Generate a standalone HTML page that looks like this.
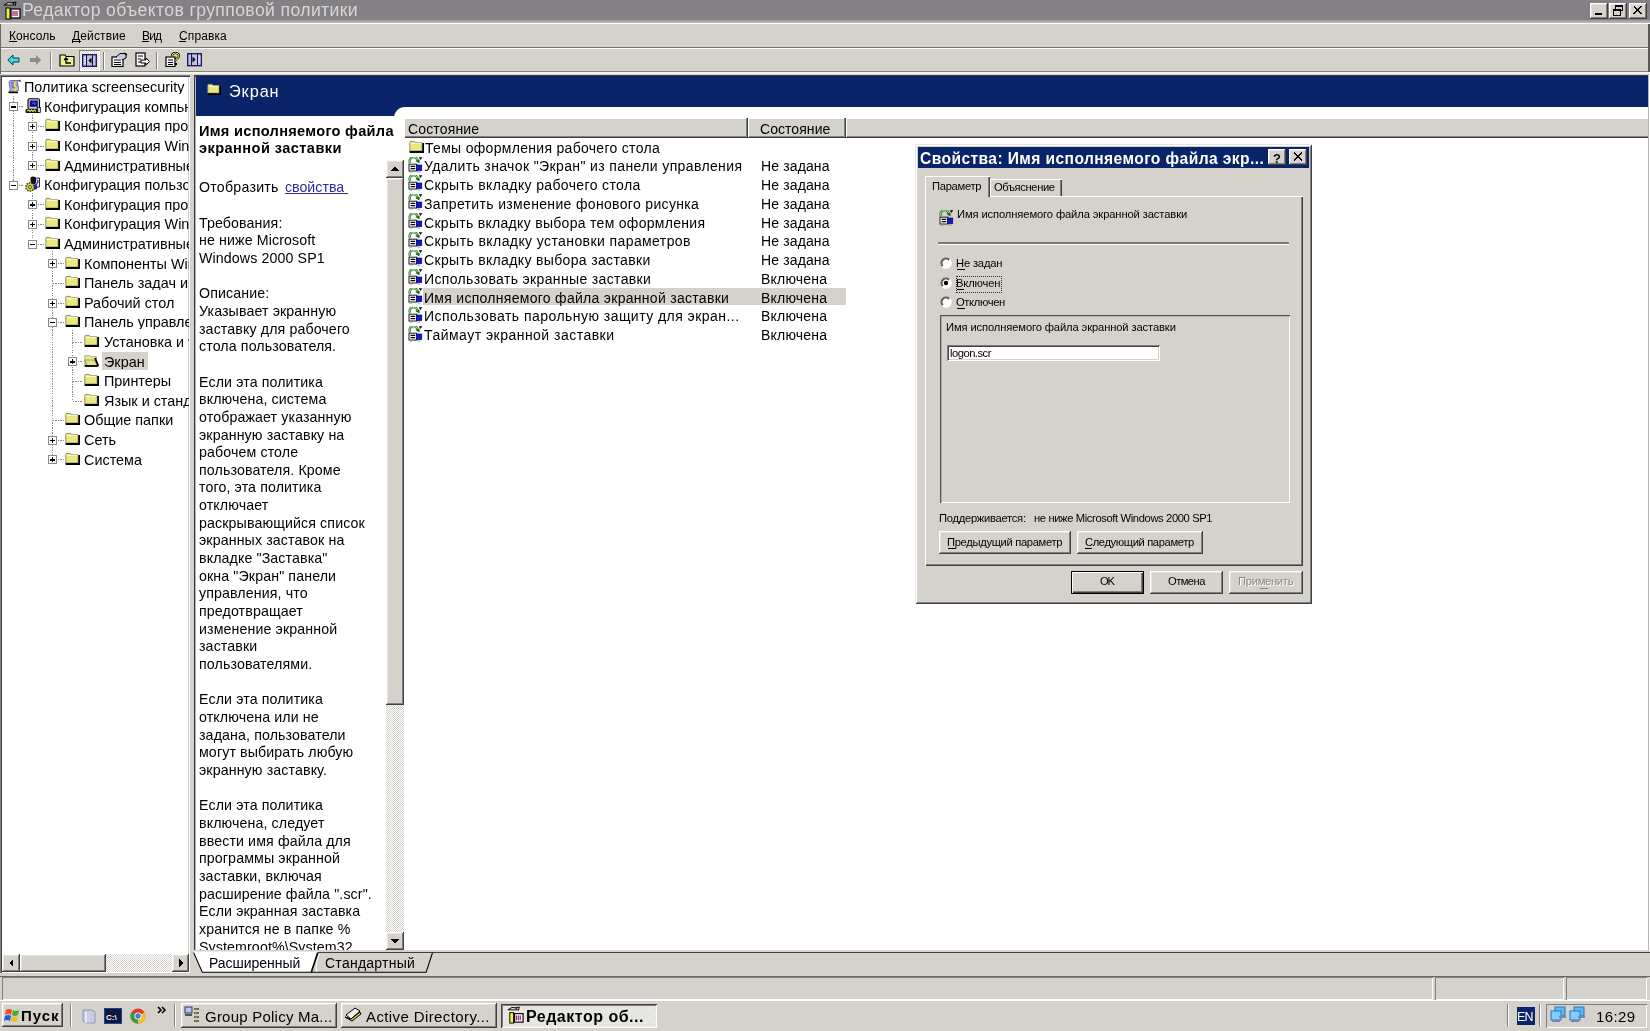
<!DOCTYPE html><html><head><meta charset="utf-8"><style>
html,body{margin:0;padding:0;width:1650px;height:1031px;overflow:hidden;background:#d5d2cc;font-family:"Liberation Sans", sans-serif;}
body>div,body>span,body>svg{position:absolute;box-sizing:border-box;}
span.t{white-space:pre;will-change:transform;}
</style></head><body>
<div style="left:0px;top:0px;width:1650px;height:20px;background:#838185;"></div>
<div style="left:0px;top:20px;width:1650px;height:3px;background:linear-gradient(#9a989b,#bdbbbd);"></div>
<div style="left:0px;top:23px;width:1650px;height:1px;background:#ffffff;"></div>
<span class="t" style="left:21.70px;top:1.60px;font-size:17.6px;line-height:17.6px;color:#d8d6d2;font-weight:400;letter-spacing:0.386px;">Редактор объектов групповой политики</span>
<div style="left:1590px;top:2.5px;width:17.5px;height:16px;box-shadow: inset -1px -1px #404040, inset 1px 1px #ffffff, inset -2px -2px #808080, inset 2px 2px #e6e3de;background:#d5d2cc;"></div>
<div style="left:1609px;top:2.5px;width:17.5px;height:16px;box-shadow: inset -1px -1px #404040, inset 1px 1px #ffffff, inset -2px -2px #808080, inset 2px 2px #e6e3de;background:#d5d2cc;"></div>
<div style="left:1629px;top:2.5px;width:17.5px;height:16px;box-shadow: inset -1px -1px #404040, inset 1px 1px #ffffff, inset -2px -2px #808080, inset 2px 2px #e6e3de;background:#d5d2cc;"></div>
<div style="left:0px;top:24px;width:1650px;height:23px;background:#d5d2cc;"></div>
<div style="left:0px;top:47px;width:1650px;height:1px;background:#767470;"></div>
<div style="left:0px;top:48px;width:1650px;height:1px;background:#ffffff;"></div>
<span class="t" style="left:8.90px;top:29.54px;font-size:12px;line-height:12px;color:#000;font-weight:400;letter-spacing:0.068px;">Консоль</span>
<div style="left:9.2px;top:41.3px;width:7.5px;height:1px;background:#000;"></div>
<span class="t" style="left:72.10px;top:29.54px;font-size:12px;line-height:12px;color:#000;font-weight:400;letter-spacing:0.148px;">Действие</span>
<div style="left:72.4px;top:41.3px;width:8.5px;height:1px;background:#000;"></div>
<span class="t" style="left:141.90px;top:29.54px;font-size:12px;line-height:12px;color:#000;font-weight:400;letter-spacing:-0.809px;">Вид</span>
<div style="left:142.2px;top:41.3px;width:7px;height:1px;background:#000;"></div>
<span class="t" style="left:178.60px;top:29.54px;font-size:12px;line-height:12px;color:#000;font-weight:400;letter-spacing:0.120px;">Справка</span>
<div style="left:178.89999999999998px;top:41.3px;width:7.5px;height:1px;background:#000;"></div>
<div style="left:0px;top:49px;width:1650px;height:22px;background:#d5d2cc;"></div>
<div style="left:0px;top:71px;width:1650px;height:1px;background:#858380;"></div>
<div style="left:0px;top:72px;width:1650px;height:2px;background:#f4f2ee;"></div>
<div style="left:0px;top:74px;width:1650px;height:902px;background:#d5d2cc;"></div>
<div style="left:0px;top:75px;width:190px;height:898px;background:#fff;box-shadow: inset 1px 1px #808080, inset 2px 2px #404040, inset -1px -1px #ffffff, inset -2px -2px #d5d2cc;"></div>
<div style="left:194px;top:75px;width:1456px;height:876px;background:#fff;box-shadow: inset 1.4px 1.4px #3a3a3a;"></div>
<div style="left:196px;top:76px;width:1454px;height:40px;background:#0a246a;"></div>
<div style="left:394px;top:106.8px;width:1256px;height:20px;background:#fff;border-top-left-radius:11px;"></div>
<div style="left:196px;top:116px;width:198px;height:2px;background:#fff;"></div>
<span class="t" style="left:229.10px;top:82.80px;font-size:16.3px;line-height:16.3px;color:#fff;font-weight:400;letter-spacing:0.916px;">Экран</span>
<div style="left:13.0px;top:96px;width:1px;height:89.35px;background:repeating-linear-gradient(#8c8c8c 0 1.3px,transparent 1.3px 2.45px);"></div>
<div style="left:32.0px;top:115px;width:1px;height:50.74000000000001px;background:repeating-linear-gradient(#8c8c8c 0 1.3px,transparent 1.3px 2.45px);"></div>
<div style="left:32.0px;top:193.35px;width:1px;height:50.83000000000001px;background:repeating-linear-gradient(#8c8c8c 0 1.3px,transparent 1.3px 2.45px);"></div>
<div style="left:52.0px;top:251.18px;width:1px;height:208.70999999999998px;background:repeating-linear-gradient(#8c8c8c 0 1.3px,transparent 1.3px 2.45px);"></div>
<div style="left:72.0px;top:329.62px;width:1px;height:71.44px;background:repeating-linear-gradient(#8c8c8c 0 1.3px,transparent 1.3px 2.45px);"></div>
<div style="left:18.5px;top:106.41px;width:5.5px;height:1px;background:repeating-linear-gradient(90deg,#8c8c8c 0 1.3px,transparent 1.3px 2.45px);"></div>
<div style="left:37.5px;top:126.01999999999998px;width:6.299999999999997px;height:1px;background:repeating-linear-gradient(90deg,#8c8c8c 0 1.3px,transparent 1.3px 2.45px);"></div>
<div style="left:37.5px;top:145.63px;width:6.299999999999997px;height:1px;background:repeating-linear-gradient(90deg,#8c8c8c 0 1.3px,transparent 1.3px 2.45px);"></div>
<div style="left:37.5px;top:165.24px;width:6.299999999999997px;height:1px;background:repeating-linear-gradient(90deg,#8c8c8c 0 1.3px,transparent 1.3px 2.45px);"></div>
<div style="left:18.5px;top:184.85px;width:5.5px;height:1px;background:repeating-linear-gradient(90deg,#8c8c8c 0 1.3px,transparent 1.3px 2.45px);"></div>
<div style="left:37.5px;top:204.45999999999998px;width:6.299999999999997px;height:1px;background:repeating-linear-gradient(90deg,#8c8c8c 0 1.3px,transparent 1.3px 2.45px);"></div>
<div style="left:37.5px;top:224.07px;width:6.299999999999997px;height:1px;background:repeating-linear-gradient(90deg,#8c8c8c 0 1.3px,transparent 1.3px 2.45px);"></div>
<div style="left:37.5px;top:243.68px;width:6.299999999999997px;height:1px;background:repeating-linear-gradient(90deg,#8c8c8c 0 1.3px,transparent 1.3px 2.45px);"></div>
<div style="left:57.5px;top:263.29px;width:6.099999999999994px;height:1px;background:repeating-linear-gradient(90deg,#8c8c8c 0 1.3px,transparent 1.3px 2.45px);"></div>
<div style="left:52.5px;top:282.9px;width:11.099999999999994px;height:1px;background:repeating-linear-gradient(90deg,#8c8c8c 0 1.3px,transparent 1.3px 2.45px);"></div>
<div style="left:57.5px;top:302.51px;width:6.099999999999994px;height:1px;background:repeating-linear-gradient(90deg,#8c8c8c 0 1.3px,transparent 1.3px 2.45px);"></div>
<div style="left:57.5px;top:322.12px;width:6.099999999999994px;height:1px;background:repeating-linear-gradient(90deg,#8c8c8c 0 1.3px,transparent 1.3px 2.45px);"></div>
<div style="left:72.5px;top:341.73px;width:10.099999999999994px;height:1px;background:repeating-linear-gradient(90deg,#8c8c8c 0 1.3px,transparent 1.3px 2.45px);"></div>
<div style="left:77.5px;top:361.34px;width:5.099999999999994px;height:1px;background:repeating-linear-gradient(90deg,#8c8c8c 0 1.3px,transparent 1.3px 2.45px);"></div>
<div style="left:72.5px;top:380.95px;width:10.099999999999994px;height:1px;background:repeating-linear-gradient(90deg,#8c8c8c 0 1.3px,transparent 1.3px 2.45px);"></div>
<div style="left:72.5px;top:400.56px;width:10.099999999999994px;height:1px;background:repeating-linear-gradient(90deg,#8c8c8c 0 1.3px,transparent 1.3px 2.45px);"></div>
<div style="left:52.5px;top:420.17px;width:11.099999999999994px;height:1px;background:repeating-linear-gradient(90deg,#8c8c8c 0 1.3px,transparent 1.3px 2.45px);"></div>
<div style="left:57.5px;top:439.78000000000003px;width:6.099999999999994px;height:1px;background:repeating-linear-gradient(90deg,#8c8c8c 0 1.3px,transparent 1.3px 2.45px);"></div>
<div style="left:57.5px;top:459.39px;width:6.099999999999994px;height:1px;background:repeating-linear-gradient(90deg,#8c8c8c 0 1.3px,transparent 1.3px 2.45px);"></div>
<svg style="left:7px;top:79.3px" width="15" height="15" viewBox="0 0 15 15"><path d="M4 1.5 Q2 1.5 2 3.5 L3 9 Q3.5 11 2 12.5 L10 12.5 Q12 12 11.5 9.5 L10.5 4 Q10 2 12 1.5 Z" fill="#a8a8e0" stroke="#5858a0" stroke-width="0.8"/><path d="M4 4 L9 4 M4.5 6 L9.5 6 M5 8 L10 8" stroke="#4040a0" stroke-width="0.9"/><path d="M9 3.5 Q6 5 8.5 7.5 Q11 10 7 11.5" fill="none" stroke="#e8e040" stroke-width="2"/><path d="M1.5 13.5 L11 13.5" stroke="#000" stroke-width="1.4"/><path d="M12 1 Q14 1.5 13 3" fill="none" stroke="#000" stroke-width="1"/></svg>
<span class="t" style="left:23.90px;top:80.11px;font-size:14.4px;line-height:14.4px;color:#000;font-weight:400;width:164.6px;overflow:hidden;">Политика screensecurity</span>
<div style="left:9.0px;top:102.41px;width:9px;height:9px;background:#fff;border:1px solid #8a8a8a;"></div>
<div style="left:11.0px;top:106.41px;width:5px;height:1.2px;background:#000;"></div>
<svg style="left:25px;top:97.91px" width="16" height="16" viewBox="0 0 16 16"><rect x="3" y="0.8" width="11.5" height="10.5" rx="1.5" fill="#c8c8d8" stroke="#000" stroke-width="1.1"/><rect x="4.8" y="2.5" width="8" height="6.3" fill="#10108a"/><path d="M7 5 h3 v2" stroke="#8080ff" stroke-width="0.8" fill="none"/><path d="M0.8 11 L14.5 11 Q15.5 13 14.5 15 L0.8 15 Q0.2 13 0.8 11 Z" fill="#151510"/><path d="M2 13 L3.5 12 L5 13.5 L6.5 12 L8 13.5 L9.5 12 L11 13.5" stroke="#e0e060" stroke-width="1.2" fill="none"/><rect x="12.5" y="9.5" width="3" height="5" fill="#c8c8e0" stroke="#000" stroke-width="0.7"/></svg>
<span class="t" style="left:44.10px;top:99.72px;font-size:14.4px;line-height:14.4px;color:#000;font-weight:400;width:144.4px;overflow:hidden;">Конфигурация компьютера</span>
<div style="left:28.0px;top:122.01999999999998px;width:9px;height:9px;background:#fff;border:1px solid #8a8a8a;"></div>
<div style="left:30.0px;top:126.01999999999998px;width:5px;height:1.2px;background:#000;"></div>
<div style="left:31.9px;top:124.01999999999998px;width:1.2px;height:5px;background:#000;"></div>
<svg style="left:44.8px;top:118.31999999999998px" width="15" height="13" viewBox="0 0 15 13"><path d="M0.8 11 L0.8 2.2 Q0.8 1.4 1.6 1.4 L5.4 1.4 L6.8 2.8 L13.2 2.8 L13.2 11 Z" fill="#e9e77e" stroke="#8a8860" stroke-width="0.9"/><path d="M1.8 3.6 L12.2 3.6" stroke="#fbfbd0" stroke-width="1"/><path d="M0.6 12 L14.2 12 L14.2 3" fill="none" stroke="#000" stroke-width="1.9"/></svg>
<span class="t" style="left:63.90px;top:119.33px;font-size:14.4px;line-height:14.4px;color:#000;font-weight:400;width:124.6px;overflow:hidden;">Конфигурация программ</span>
<div style="left:28.0px;top:141.63px;width:9px;height:9px;background:#fff;border:1px solid #8a8a8a;"></div>
<div style="left:30.0px;top:145.63px;width:5px;height:1.2px;background:#000;"></div>
<div style="left:31.9px;top:143.63px;width:1.2px;height:5px;background:#000;"></div>
<svg style="left:44.8px;top:137.93px" width="15" height="13" viewBox="0 0 15 13"><path d="M0.8 11 L0.8 2.2 Q0.8 1.4 1.6 1.4 L5.4 1.4 L6.8 2.8 L13.2 2.8 L13.2 11 Z" fill="#e9e77e" stroke="#8a8860" stroke-width="0.9"/><path d="M1.8 3.6 L12.2 3.6" stroke="#fbfbd0" stroke-width="1"/><path d="M0.6 12 L14.2 12 L14.2 3" fill="none" stroke="#000" stroke-width="1.9"/></svg>
<span class="t" style="left:63.90px;top:138.94px;font-size:14.4px;line-height:14.4px;color:#000;font-weight:400;width:124.6px;overflow:hidden;">Конфигурация Windows</span>
<div style="left:28.0px;top:161.24px;width:9px;height:9px;background:#fff;border:1px solid #8a8a8a;"></div>
<div style="left:30.0px;top:165.24px;width:5px;height:1.2px;background:#000;"></div>
<div style="left:31.9px;top:163.24px;width:1.2px;height:5px;background:#000;"></div>
<svg style="left:44.8px;top:157.54000000000002px" width="15" height="13" viewBox="0 0 15 13"><path d="M0.8 11 L0.8 2.2 Q0.8 1.4 1.6 1.4 L5.4 1.4 L6.8 2.8 L13.2 2.8 L13.2 11 Z" fill="#e9e77e" stroke="#8a8860" stroke-width="0.9"/><path d="M1.8 3.6 L12.2 3.6" stroke="#fbfbd0" stroke-width="1"/><path d="M0.6 12 L14.2 12 L14.2 3" fill="none" stroke="#000" stroke-width="1.9"/></svg>
<span class="t" style="left:63.90px;top:158.55px;font-size:14.4px;line-height:14.4px;color:#000;font-weight:400;width:124.6px;overflow:hidden;">Административные шаблоны</span>
<div style="left:9.0px;top:180.85px;width:9px;height:9px;background:#fff;border:1px solid #8a8a8a;"></div>
<div style="left:11.0px;top:184.85px;width:5px;height:1.2px;background:#000;"></div>
<svg style="left:25px;top:176.35px" width="16" height="16" viewBox="0 0 16 16"><path d="M10 2 L14.5 2 L14.5 11 L10 11 Z" fill="#f4f4ff" stroke="#202060" stroke-width="1"/><path d="M11.5 4 Q13.5 4 13 6 L12 7 L12 8.5" fill="none" stroke="#2020a0" stroke-width="1.2"/><path d="M5.5 1.5 Q8.5 -0.5 11 2 L11 6 Q10 9 7.5 8.5 Q6 7.5 5.5 5 Z" fill="#101010"/><circle cx="5" cy="11" r="4.2" fill="#c8d040" stroke="#303010" stroke-width="1.3" stroke-dasharray="1.6 1"/><circle cx="5" cy="11" r="1.5" fill="#f0f0a0" stroke="#303010" stroke-width="0.8"/><path d="M9 9 L12 8 L12 13 L9 14 Z" fill="#2828a0"/></svg>
<span class="t" style="left:44.10px;top:178.16px;font-size:14.4px;line-height:14.4px;color:#000;font-weight:400;width:144.4px;overflow:hidden;">Конфигурация пользователя</span>
<div style="left:28.0px;top:200.45999999999998px;width:9px;height:9px;background:#fff;border:1px solid #8a8a8a;"></div>
<div style="left:30.0px;top:204.45999999999998px;width:5px;height:1.2px;background:#000;"></div>
<div style="left:31.9px;top:202.45999999999998px;width:1.2px;height:5px;background:#000;"></div>
<svg style="left:44.8px;top:196.76px" width="15" height="13" viewBox="0 0 15 13"><path d="M0.8 11 L0.8 2.2 Q0.8 1.4 1.6 1.4 L5.4 1.4 L6.8 2.8 L13.2 2.8 L13.2 11 Z" fill="#e9e77e" stroke="#8a8860" stroke-width="0.9"/><path d="M1.8 3.6 L12.2 3.6" stroke="#fbfbd0" stroke-width="1"/><path d="M0.6 12 L14.2 12 L14.2 3" fill="none" stroke="#000" stroke-width="1.9"/></svg>
<span class="t" style="left:63.90px;top:197.77px;font-size:14.4px;line-height:14.4px;color:#000;font-weight:400;width:124.6px;overflow:hidden;">Конфигурация программ</span>
<div style="left:28.0px;top:220.07px;width:9px;height:9px;background:#fff;border:1px solid #8a8a8a;"></div>
<div style="left:30.0px;top:224.07px;width:5px;height:1.2px;background:#000;"></div>
<div style="left:31.9px;top:222.07px;width:1.2px;height:5px;background:#000;"></div>
<svg style="left:44.8px;top:216.37px" width="15" height="13" viewBox="0 0 15 13"><path d="M0.8 11 L0.8 2.2 Q0.8 1.4 1.6 1.4 L5.4 1.4 L6.8 2.8 L13.2 2.8 L13.2 11 Z" fill="#e9e77e" stroke="#8a8860" stroke-width="0.9"/><path d="M1.8 3.6 L12.2 3.6" stroke="#fbfbd0" stroke-width="1"/><path d="M0.6 12 L14.2 12 L14.2 3" fill="none" stroke="#000" stroke-width="1.9"/></svg>
<span class="t" style="left:63.90px;top:217.38px;font-size:14.4px;line-height:14.4px;color:#000;font-weight:400;width:124.6px;overflow:hidden;">Конфигурация Windows</span>
<div style="left:28.0px;top:239.68px;width:9px;height:9px;background:#fff;border:1px solid #8a8a8a;"></div>
<div style="left:30.0px;top:243.68px;width:5px;height:1.2px;background:#000;"></div>
<svg style="left:44.8px;top:235.98000000000002px" width="15" height="13" viewBox="0 0 15 13"><path d="M0.8 11 L0.8 2.2 Q0.8 1.4 1.6 1.4 L5.4 1.4 L6.8 2.8 L13.2 2.8 L13.2 11 Z" fill="#e9e77e" stroke="#8a8860" stroke-width="0.9"/><path d="M1.8 3.6 L12.2 3.6" stroke="#fbfbd0" stroke-width="1"/><path d="M0.6 12 L14.2 12 L14.2 3" fill="none" stroke="#000" stroke-width="1.9"/></svg>
<span class="t" style="left:63.90px;top:236.99px;font-size:14.4px;line-height:14.4px;color:#000;font-weight:400;width:124.6px;overflow:hidden;">Административные шаблоны</span>
<div style="left:48.0px;top:259.29px;width:9px;height:9px;background:#fff;border:1px solid #8a8a8a;"></div>
<div style="left:50.0px;top:263.29px;width:5px;height:1.2px;background:#000;"></div>
<div style="left:51.9px;top:261.29px;width:1.2px;height:5px;background:#000;"></div>
<svg style="left:64.6px;top:255.59000000000003px" width="15" height="13" viewBox="0 0 15 13"><path d="M0.8 11 L0.8 2.2 Q0.8 1.4 1.6 1.4 L5.4 1.4 L6.8 2.8 L13.2 2.8 L13.2 11 Z" fill="#e9e77e" stroke="#8a8860" stroke-width="0.9"/><path d="M1.8 3.6 L12.2 3.6" stroke="#fbfbd0" stroke-width="1"/><path d="M0.6 12 L14.2 12 L14.2 3" fill="none" stroke="#000" stroke-width="1.9"/></svg>
<span class="t" style="left:83.60px;top:256.60px;font-size:14.4px;line-height:14.4px;color:#000;font-weight:400;width:104.9px;overflow:hidden;">Компоненты Windows</span>
<svg style="left:64.6px;top:275.2px" width="15" height="13" viewBox="0 0 15 13"><path d="M0.8 11 L0.8 2.2 Q0.8 1.4 1.6 1.4 L5.4 1.4 L6.8 2.8 L13.2 2.8 L13.2 11 Z" fill="#e9e77e" stroke="#8a8860" stroke-width="0.9"/><path d="M1.8 3.6 L12.2 3.6" stroke="#fbfbd0" stroke-width="1"/><path d="M0.6 12 L14.2 12 L14.2 3" fill="none" stroke="#000" stroke-width="1.9"/></svg>
<span class="t" style="left:83.60px;top:276.21px;font-size:14.4px;line-height:14.4px;color:#000;font-weight:400;width:104.9px;overflow:hidden;">Панель задач и меню Пуск</span>
<div style="left:48.0px;top:298.51px;width:9px;height:9px;background:#fff;border:1px solid #8a8a8a;"></div>
<div style="left:50.0px;top:302.51px;width:5px;height:1.2px;background:#000;"></div>
<div style="left:51.9px;top:300.51px;width:1.2px;height:5px;background:#000;"></div>
<svg style="left:64.6px;top:294.81px" width="15" height="13" viewBox="0 0 15 13"><path d="M0.8 11 L0.8 2.2 Q0.8 1.4 1.6 1.4 L5.4 1.4 L6.8 2.8 L13.2 2.8 L13.2 11 Z" fill="#e9e77e" stroke="#8a8860" stroke-width="0.9"/><path d="M1.8 3.6 L12.2 3.6" stroke="#fbfbd0" stroke-width="1"/><path d="M0.6 12 L14.2 12 L14.2 3" fill="none" stroke="#000" stroke-width="1.9"/></svg>
<span class="t" style="left:83.60px;top:295.82px;font-size:14.4px;line-height:14.4px;color:#000;font-weight:400;width:104.9px;overflow:hidden;">Рабочий стол</span>
<div style="left:48.0px;top:318.12px;width:9px;height:9px;background:#fff;border:1px solid #8a8a8a;"></div>
<div style="left:50.0px;top:322.12px;width:5px;height:1.2px;background:#000;"></div>
<svg style="left:64.6px;top:314.42px" width="15" height="13" viewBox="0 0 15 13"><path d="M0.8 11 L0.8 2.2 Q0.8 1.4 1.6 1.4 L5.4 1.4 L6.8 2.8 L13.2 2.8 L13.2 11 Z" fill="#e9e77e" stroke="#8a8860" stroke-width="0.9"/><path d="M1.8 3.6 L12.2 3.6" stroke="#fbfbd0" stroke-width="1"/><path d="M0.6 12 L14.2 12 L14.2 3" fill="none" stroke="#000" stroke-width="1.9"/></svg>
<span class="t" style="left:83.60px;top:315.43px;font-size:14.4px;line-height:14.4px;color:#000;font-weight:400;width:104.9px;overflow:hidden;">Панель управления</span>
<svg style="left:83.6px;top:334.03000000000003px" width="15" height="13" viewBox="0 0 15 13"><path d="M0.8 11 L0.8 2.2 Q0.8 1.4 1.6 1.4 L5.4 1.4 L6.8 2.8 L13.2 2.8 L13.2 11 Z" fill="#e9e77e" stroke="#8a8860" stroke-width="0.9"/><path d="M1.8 3.6 L12.2 3.6" stroke="#fbfbd0" stroke-width="1"/><path d="M0.6 12 L14.2 12 L14.2 3" fill="none" stroke="#000" stroke-width="1.9"/></svg>
<span class="t" style="left:103.80px;top:335.04px;font-size:14.4px;line-height:14.4px;color:#000;font-weight:400;width:84.7px;overflow:hidden;">Установка и удаление программ</span>
<div style="left:68.0px;top:357.34px;width:9px;height:9px;background:#fff;border:1px solid #8a8a8a;"></div>
<div style="left:70.0px;top:361.34px;width:5px;height:1.2px;background:#000;"></div>
<div style="left:71.9px;top:359.34px;width:1.2px;height:5px;background:#000;"></div>
<svg style="left:83.6px;top:353.64px" width="15" height="13" viewBox="0 0 15 13"><path d="M0.8 1.6 L5.6 1.6 L6.8 2.8 L12.5 2.8 L12.5 11 L0.8 11 Z" fill="#ecea8c" stroke="#a8a67a" stroke-width="0.9"/><path d="M0.8 6 L10 6 L13.8 11.5 L3 11.5 Z" fill="#e4e288" stroke="#8a8860" stroke-width="0.8"/><path d="M0.6 12 L14 12" stroke="#000" stroke-width="1.8"/><path d="M11 4 L14.3 12" stroke="#000" stroke-width="1.8"/></svg>
<div style="left:102.1px;top:352.1px;width:45.8px;height:18.3px;background:#d5d2cc;"></div>
<span class="t" style="left:103.80px;top:354.65px;font-size:14.4px;line-height:14.4px;color:#000;font-weight:400;width:84.7px;overflow:hidden;">Экран</span>
<svg style="left:83.6px;top:373.25px" width="15" height="13" viewBox="0 0 15 13"><path d="M0.8 11 L0.8 2.2 Q0.8 1.4 1.6 1.4 L5.4 1.4 L6.8 2.8 L13.2 2.8 L13.2 11 Z" fill="#e9e77e" stroke="#8a8860" stroke-width="0.9"/><path d="M1.8 3.6 L12.2 3.6" stroke="#fbfbd0" stroke-width="1"/><path d="M0.6 12 L14.2 12 L14.2 3" fill="none" stroke="#000" stroke-width="1.9"/></svg>
<span class="t" style="left:103.80px;top:374.26px;font-size:14.4px;line-height:14.4px;color:#000;font-weight:400;width:84.7px;overflow:hidden;">Принтеры</span>
<svg style="left:83.6px;top:392.86px" width="15" height="13" viewBox="0 0 15 13"><path d="M0.8 11 L0.8 2.2 Q0.8 1.4 1.6 1.4 L5.4 1.4 L6.8 2.8 L13.2 2.8 L13.2 11 Z" fill="#e9e77e" stroke="#8a8860" stroke-width="0.9"/><path d="M1.8 3.6 L12.2 3.6" stroke="#fbfbd0" stroke-width="1"/><path d="M0.6 12 L14.2 12 L14.2 3" fill="none" stroke="#000" stroke-width="1.9"/></svg>
<span class="t" style="left:103.80px;top:393.87px;font-size:14.4px;line-height:14.4px;color:#000;font-weight:400;width:84.7px;overflow:hidden;">Язык и стандарты</span>
<svg style="left:64.6px;top:412.47px" width="15" height="13" viewBox="0 0 15 13"><path d="M0.8 11 L0.8 2.2 Q0.8 1.4 1.6 1.4 L5.4 1.4 L6.8 2.8 L13.2 2.8 L13.2 11 Z" fill="#e9e77e" stroke="#8a8860" stroke-width="0.9"/><path d="M1.8 3.6 L12.2 3.6" stroke="#fbfbd0" stroke-width="1"/><path d="M0.6 12 L14.2 12 L14.2 3" fill="none" stroke="#000" stroke-width="1.9"/></svg>
<span class="t" style="left:83.60px;top:413.48px;font-size:14.4px;line-height:14.4px;color:#000;font-weight:400;width:104.9px;overflow:hidden;">Общие папки</span>
<div style="left:48.0px;top:435.78000000000003px;width:9px;height:9px;background:#fff;border:1px solid #8a8a8a;"></div>
<div style="left:50.0px;top:439.78000000000003px;width:5px;height:1.2px;background:#000;"></div>
<div style="left:51.9px;top:437.78000000000003px;width:1.2px;height:5px;background:#000;"></div>
<svg style="left:64.6px;top:432.08000000000004px" width="15" height="13" viewBox="0 0 15 13"><path d="M0.8 11 L0.8 2.2 Q0.8 1.4 1.6 1.4 L5.4 1.4 L6.8 2.8 L13.2 2.8 L13.2 11 Z" fill="#e9e77e" stroke="#8a8860" stroke-width="0.9"/><path d="M1.8 3.6 L12.2 3.6" stroke="#fbfbd0" stroke-width="1"/><path d="M0.6 12 L14.2 12 L14.2 3" fill="none" stroke="#000" stroke-width="1.9"/></svg>
<span class="t" style="left:83.60px;top:433.09px;font-size:14.4px;line-height:14.4px;color:#000;font-weight:400;width:104.9px;overflow:hidden;">Сеть</span>
<div style="left:48.0px;top:455.39px;width:9px;height:9px;background:#fff;border:1px solid #8a8a8a;"></div>
<div style="left:50.0px;top:459.39px;width:5px;height:1.2px;background:#000;"></div>
<div style="left:51.9px;top:457.39px;width:1.2px;height:5px;background:#000;"></div>
<svg style="left:64.6px;top:451.69px" width="15" height="13" viewBox="0 0 15 13"><path d="M0.8 11 L0.8 2.2 Q0.8 1.4 1.6 1.4 L5.4 1.4 L6.8 2.8 L13.2 2.8 L13.2 11 Z" fill="#e9e77e" stroke="#8a8860" stroke-width="0.9"/><path d="M1.8 3.6 L12.2 3.6" stroke="#fbfbd0" stroke-width="1"/><path d="M0.6 12 L14.2 12 L14.2 3" fill="none" stroke="#000" stroke-width="1.9"/></svg>
<span class="t" style="left:83.60px;top:452.70px;font-size:14.4px;line-height:14.4px;color:#000;font-weight:400;width:104.9px;overflow:hidden;">Система</span>
<span class="t" style="left:198.90px;top:123.94px;font-size:14.6px;line-height:14.6px;color:#000;font-weight:700;letter-spacing:0.288px;">Имя исполняемого файла</span>
<span class="t" style="left:198.90px;top:141.34px;font-size:14.6px;line-height:14.6px;color:#000;font-weight:700;letter-spacing:0.420px;">экранной заставки</span>
<span class="t" style="left:198.90px;top:180.28px;font-size:14.2px;line-height:14.2px;color:#000;font-weight:400;letter-spacing:0.240px;">Отобразить</span>
<span class="t" style="left:285.40px;top:180.28px;font-size:14.2px;line-height:14.2px;color:#2c2ca0;font-weight:400;text-decoration:underline;">свойства </span>
<span class="t" style="left:198.90px;top:215.58px;font-size:14.2px;line-height:14.2px;color:#000;font-weight:400;letter-spacing:0.12px;">Требования:</span>
<span class="t" style="left:198.90px;top:233.24px;font-size:14.2px;line-height:14.2px;color:#000;font-weight:400;letter-spacing:0.12px;">не ниже Microsoft</span>
<span class="t" style="left:198.90px;top:250.90px;font-size:14.2px;line-height:14.2px;color:#000;font-weight:400;letter-spacing:0.12px;">Windows 2000 SP1</span>
<span class="t" style="left:198.90px;top:286.22px;font-size:14.2px;line-height:14.2px;color:#000;font-weight:400;letter-spacing:0.12px;">Описание:</span>
<span class="t" style="left:198.90px;top:303.88px;font-size:14.2px;line-height:14.2px;color:#000;font-weight:400;letter-spacing:0.12px;">Указывает экранную</span>
<span class="t" style="left:198.90px;top:321.54px;font-size:14.2px;line-height:14.2px;color:#000;font-weight:400;letter-spacing:0.12px;">заставку для рабочего</span>
<span class="t" style="left:198.90px;top:339.20px;font-size:14.2px;line-height:14.2px;color:#000;font-weight:400;letter-spacing:0.12px;">стола пользователя.</span>
<span class="t" style="left:198.90px;top:374.52px;font-size:14.2px;line-height:14.2px;color:#000;font-weight:400;letter-spacing:0.12px;">Если эта политика</span>
<span class="t" style="left:198.90px;top:392.18px;font-size:14.2px;line-height:14.2px;color:#000;font-weight:400;letter-spacing:0.12px;">включена, система</span>
<span class="t" style="left:198.90px;top:409.84px;font-size:14.2px;line-height:14.2px;color:#000;font-weight:400;letter-spacing:0.12px;">отображает указанную</span>
<span class="t" style="left:198.90px;top:427.50px;font-size:14.2px;line-height:14.2px;color:#000;font-weight:400;letter-spacing:0.12px;">экранную заставку на</span>
<span class="t" style="left:198.90px;top:445.16px;font-size:14.2px;line-height:14.2px;color:#000;font-weight:400;letter-spacing:0.12px;">рабочем столе</span>
<span class="t" style="left:198.90px;top:462.82px;font-size:14.2px;line-height:14.2px;color:#000;font-weight:400;letter-spacing:0.12px;">пользователя. Кроме</span>
<span class="t" style="left:198.90px;top:480.48px;font-size:14.2px;line-height:14.2px;color:#000;font-weight:400;letter-spacing:0.12px;">того, эта политика</span>
<span class="t" style="left:198.90px;top:498.14px;font-size:14.2px;line-height:14.2px;color:#000;font-weight:400;letter-spacing:0.12px;">отключает</span>
<span class="t" style="left:198.90px;top:515.80px;font-size:14.2px;line-height:14.2px;color:#000;font-weight:400;letter-spacing:0.12px;">раскрывающийся список</span>
<span class="t" style="left:198.90px;top:533.46px;font-size:14.2px;line-height:14.2px;color:#000;font-weight:400;letter-spacing:0.12px;">экранных заставок на</span>
<span class="t" style="left:198.90px;top:551.12px;font-size:14.2px;line-height:14.2px;color:#000;font-weight:400;letter-spacing:0.12px;">вкладке &quot;Заставка&quot;</span>
<span class="t" style="left:198.90px;top:568.78px;font-size:14.2px;line-height:14.2px;color:#000;font-weight:400;letter-spacing:0.12px;">окна &quot;Экран&quot; панели</span>
<span class="t" style="left:198.90px;top:586.44px;font-size:14.2px;line-height:14.2px;color:#000;font-weight:400;letter-spacing:0.12px;">управления, что</span>
<span class="t" style="left:198.90px;top:604.10px;font-size:14.2px;line-height:14.2px;color:#000;font-weight:400;letter-spacing:0.12px;">предотвращает</span>
<span class="t" style="left:198.90px;top:621.76px;font-size:14.2px;line-height:14.2px;color:#000;font-weight:400;letter-spacing:0.12px;">изменение экранной</span>
<span class="t" style="left:198.90px;top:639.42px;font-size:14.2px;line-height:14.2px;color:#000;font-weight:400;letter-spacing:0.12px;">заставки</span>
<span class="t" style="left:198.90px;top:657.08px;font-size:14.2px;line-height:14.2px;color:#000;font-weight:400;letter-spacing:0.12px;">пользователями.</span>
<span class="t" style="left:198.90px;top:692.40px;font-size:14.2px;line-height:14.2px;color:#000;font-weight:400;letter-spacing:0.12px;">Если эта политика</span>
<span class="t" style="left:198.90px;top:710.06px;font-size:14.2px;line-height:14.2px;color:#000;font-weight:400;letter-spacing:0.12px;">отключена или не</span>
<span class="t" style="left:198.90px;top:727.72px;font-size:14.2px;line-height:14.2px;color:#000;font-weight:400;letter-spacing:0.12px;">задана, пользователи</span>
<span class="t" style="left:198.90px;top:745.38px;font-size:14.2px;line-height:14.2px;color:#000;font-weight:400;letter-spacing:0.12px;">могут выбирать любую</span>
<span class="t" style="left:198.90px;top:763.04px;font-size:14.2px;line-height:14.2px;color:#000;font-weight:400;letter-spacing:0.12px;">экранную заставку.</span>
<span class="t" style="left:198.90px;top:798.36px;font-size:14.2px;line-height:14.2px;color:#000;font-weight:400;letter-spacing:0.12px;">Если эта политика</span>
<span class="t" style="left:198.90px;top:816.02px;font-size:14.2px;line-height:14.2px;color:#000;font-weight:400;letter-spacing:0.12px;">включена, следует</span>
<span class="t" style="left:198.90px;top:833.68px;font-size:14.2px;line-height:14.2px;color:#000;font-weight:400;letter-spacing:0.12px;">ввести имя файла для</span>
<span class="t" style="left:198.90px;top:851.34px;font-size:14.2px;line-height:14.2px;color:#000;font-weight:400;letter-spacing:0.12px;">программы экранной</span>
<span class="t" style="left:198.90px;top:869.00px;font-size:14.2px;line-height:14.2px;color:#000;font-weight:400;letter-spacing:0.12px;">заставки, включая</span>
<span class="t" style="left:198.90px;top:886.66px;font-size:14.2px;line-height:14.2px;color:#000;font-weight:400;letter-spacing:0.12px;">расширение файла &quot;.scr&quot;.</span>
<span class="t" style="left:198.90px;top:904.32px;font-size:14.2px;line-height:14.2px;color:#000;font-weight:400;letter-spacing:0.12px;">Если экранная заставка</span>
<span class="t" style="left:198.90px;top:921.98px;font-size:14.2px;line-height:14.2px;color:#000;font-weight:400;letter-spacing:0.12px;">хранится не в папке %</span>
<span class="t" style="left:198.90px;top:939.64px;font-size:14.2px;line-height:14.2px;color:#000;font-weight:400;letter-spacing:0.12px;">Systemroot%\System32</span>
<svg style="left:206.5px;top:82.6px" width="14" height="12" viewBox="0 0 15 13"><path d="M0.8 11 L0.8 2.2 Q0.8 1.4 1.6 1.4 L5.4 1.4 L6.8 2.8 L13.2 2.8 L13.2 11 Z" fill="#e9e77e" stroke="#8a8860" stroke-width="0.9"/><path d="M1.8 3.6 L12.2 3.6" stroke="#fbfbd0" stroke-width="1"/><path d="M0.6 12 L14.2 12 L14.2 3" fill="none" stroke="#000" stroke-width="1.9"/></svg>
<div style="left:386px;top:160px;width:17.6px;height:790px;background:repeating-conic-gradient(#ffffff 0 25%, #d5d2cc 0 50%) 0 0/2px 2px;"></div>
<div style="left:386px;top:160px;width:17.6px;height:17.6px;box-shadow: inset -1px -1px #404040, inset 1px 1px #ffffff, inset -2px -2px #808080, inset 2px 2px #e6e3de;background:#d5d2cc;"></div>
<div style="left:386px;top:178px;width:17.6px;height:526.5px;box-shadow: inset -1px -1px #404040, inset 1px 1px #ffffff, inset -2px -2px #808080, inset 2px 2px #e6e3de;background:#d5d2cc;"></div>
<div style="left:386px;top:932.4px;width:17.6px;height:17.6px;box-shadow: inset -1px -1px #404040, inset 1px 1px #ffffff, inset -2px -2px #808080, inset 2px 2px #e6e3de;background:#d5d2cc;"></div>
<svg style="left:386px;top:160px" width="18" height="18" viewBox="0 0 18 18" shape-rendering="crispEdges"><path d="M5 11 L13 11 L9 6 Z" fill="#000"/></svg>
<svg style="left:386px;top:932.4px" width="18" height="18" viewBox="0 0 18 18" shape-rendering="crispEdges"><path d="M5 7 L13 7 L9 12 Z" fill="#000"/></svg>
<div style="left:404px;top:118px;width:1246px;height:20px;background:#d5d2cc;box-shadow: inset 1px 1px #ffffff, inset 0 -1px #404040, inset 0 -2px #808080;"></div>
<div style="left:745.5px;top:118px;width:1px;height:19px;background:#808080;"></div>
<div style="left:746.5px;top:118px;width:1px;height:19px;background:#404040;"></div>
<div style="left:747.5px;top:119px;width:1px;height:18px;background:#ffffff;"></div>
<div style="left:843.7px;top:118px;width:1px;height:19px;background:#808080;"></div>
<div style="left:844.7px;top:118px;width:1px;height:19px;background:#404040;"></div>
<div style="left:845.7px;top:119px;width:1px;height:18px;background:#ffffff;"></div>
<span class="t" style="left:408.10px;top:121.55px;font-size:14px;line-height:14px;color:#000;font-weight:400;letter-spacing:0.143px;">Состояние</span>
<span class="t" style="left:760.10px;top:121.55px;font-size:14px;line-height:14px;color:#000;font-weight:400;letter-spacing:0.055px;">Состояние</span>
<div style="left:423px;top:287.6px;width:422.5px;height:17.5px;background:#d5d2cc;"></div>
<svg style="left:408.7px;top:139.9px" width="15" height="13" viewBox="0 0 15 13"><path d="M0.8 11 L0.8 2.2 Q0.8 1.4 1.6 1.4 L5.4 1.4 L6.8 2.8 L13.2 2.8 L13.2 11 Z" fill="#e9e77e" stroke="#8a8860" stroke-width="0.9"/><path d="M1.8 3.6 L12.2 3.6" stroke="#fbfbd0" stroke-width="1"/><path d="M0.6 12 L14.2 12 L14.2 3" fill="none" stroke="#000" stroke-width="1.9"/></svg>
<span class="t" style="left:424.60px;top:140.55px;font-size:14px;line-height:14px;color:#000;font-weight:400;letter-spacing:0.303px;">Темы оформления рабочего стола</span>
<svg style="left:407.5px;top:156.66px" width="15" height="16" viewBox="0 0 15 16"><path d="M2.2 6.2 A4 4 0 1 1 9.6 4.4" fill="none" stroke="#2a7a2a" stroke-width="2.4"/><path d="M2.2 6.2 A4 4 0 1 1 9.6 4.4" fill="none" stroke="#a8e8a0" stroke-width="1"/><path d="M7.5 4 L11.5 6.5 L11.5 2.5 Z" fill="#1a5a1a"/><path d="M10.8 0.3 L14.2 0.3 L12.5 3 Z" fill="#000"/><rect x="1" y="7.2" width="7.8" height="6.8" fill="#fff" stroke="#1a1a1a" stroke-width="1"/><path d="M2.6 9.4 h4.6 M2.6 11.6 h4.6" stroke="#000" stroke-width="1.1"/><rect x="8.6" y="8" width="5.2" height="5.6" fill="#1414d8" stroke="#000040" stroke-width="0.6"/><path d="M1.5 15 h3 M9.5 15 h3" stroke="#909090" stroke-width="1"/></svg>
<span class="t" style="left:423.60px;top:159.31px;font-size:14px;line-height:14px;color:#000;font-weight:400;letter-spacing:0.377px;">Удалить значок &quot;Экран&quot; из панели управления</span>
<span class="t" style="left:760.90px;top:159.31px;font-size:14px;line-height:14px;color:#000;font-weight:400;letter-spacing:0.129px;">Не задана</span>
<svg style="left:407.5px;top:175.42000000000002px" width="15" height="16" viewBox="0 0 15 16"><path d="M2.2 6.2 A4 4 0 1 1 9.6 4.4" fill="none" stroke="#2a7a2a" stroke-width="2.4"/><path d="M2.2 6.2 A4 4 0 1 1 9.6 4.4" fill="none" stroke="#a8e8a0" stroke-width="1"/><path d="M7.5 4 L11.5 6.5 L11.5 2.5 Z" fill="#1a5a1a"/><path d="M10.8 0.3 L14.2 0.3 L12.5 3 Z" fill="#000"/><rect x="1" y="7.2" width="7.8" height="6.8" fill="#fff" stroke="#1a1a1a" stroke-width="1"/><path d="M2.6 9.4 h4.6 M2.6 11.6 h4.6" stroke="#000" stroke-width="1.1"/><rect x="8.6" y="8" width="5.2" height="5.6" fill="#1414d8" stroke="#000040" stroke-width="0.6"/><path d="M1.5 15 h3 M9.5 15 h3" stroke="#909090" stroke-width="1"/></svg>
<span class="t" style="left:423.60px;top:178.07px;font-size:14px;line-height:14px;color:#000;font-weight:400;letter-spacing:0.364px;">Скрыть вкладку рабочего стола</span>
<span class="t" style="left:760.90px;top:178.07px;font-size:14px;line-height:14px;color:#000;font-weight:400;letter-spacing:0.129px;">Не задана</span>
<svg style="left:407.5px;top:194.18px" width="15" height="16" viewBox="0 0 15 16"><path d="M2.2 6.2 A4 4 0 1 1 9.6 4.4" fill="none" stroke="#2a7a2a" stroke-width="2.4"/><path d="M2.2 6.2 A4 4 0 1 1 9.6 4.4" fill="none" stroke="#a8e8a0" stroke-width="1"/><path d="M7.5 4 L11.5 6.5 L11.5 2.5 Z" fill="#1a5a1a"/><path d="M10.8 0.3 L14.2 0.3 L12.5 3 Z" fill="#000"/><rect x="1" y="7.2" width="7.8" height="6.8" fill="#fff" stroke="#1a1a1a" stroke-width="1"/><path d="M2.6 9.4 h4.6 M2.6 11.6 h4.6" stroke="#000" stroke-width="1.1"/><rect x="8.6" y="8" width="5.2" height="5.6" fill="#1414d8" stroke="#000040" stroke-width="0.6"/><path d="M1.5 15 h3 M9.5 15 h3" stroke="#909090" stroke-width="1"/></svg>
<span class="t" style="left:423.60px;top:196.83px;font-size:14px;line-height:14px;color:#000;font-weight:400;letter-spacing:0.338px;">Запретить изменение фонового рисунка</span>
<span class="t" style="left:760.90px;top:196.83px;font-size:14px;line-height:14px;color:#000;font-weight:400;letter-spacing:0.129px;">Не задана</span>
<svg style="left:407.5px;top:212.94px" width="15" height="16" viewBox="0 0 15 16"><path d="M2.2 6.2 A4 4 0 1 1 9.6 4.4" fill="none" stroke="#2a7a2a" stroke-width="2.4"/><path d="M2.2 6.2 A4 4 0 1 1 9.6 4.4" fill="none" stroke="#a8e8a0" stroke-width="1"/><path d="M7.5 4 L11.5 6.5 L11.5 2.5 Z" fill="#1a5a1a"/><path d="M10.8 0.3 L14.2 0.3 L12.5 3 Z" fill="#000"/><rect x="1" y="7.2" width="7.8" height="6.8" fill="#fff" stroke="#1a1a1a" stroke-width="1"/><path d="M2.6 9.4 h4.6 M2.6 11.6 h4.6" stroke="#000" stroke-width="1.1"/><rect x="8.6" y="8" width="5.2" height="5.6" fill="#1414d8" stroke="#000040" stroke-width="0.6"/><path d="M1.5 15 h3 M9.5 15 h3" stroke="#909090" stroke-width="1"/></svg>
<span class="t" style="left:423.60px;top:215.59px;font-size:14px;line-height:14px;color:#000;font-weight:400;letter-spacing:0.297px;">Скрыть вкладку выбора тем оформления</span>
<span class="t" style="left:760.90px;top:215.59px;font-size:14px;line-height:14px;color:#000;font-weight:400;letter-spacing:0.129px;">Не задана</span>
<svg style="left:407.5px;top:231.70000000000002px" width="15" height="16" viewBox="0 0 15 16"><path d="M2.2 6.2 A4 4 0 1 1 9.6 4.4" fill="none" stroke="#2a7a2a" stroke-width="2.4"/><path d="M2.2 6.2 A4 4 0 1 1 9.6 4.4" fill="none" stroke="#a8e8a0" stroke-width="1"/><path d="M7.5 4 L11.5 6.5 L11.5 2.5 Z" fill="#1a5a1a"/><path d="M10.8 0.3 L14.2 0.3 L12.5 3 Z" fill="#000"/><rect x="1" y="7.2" width="7.8" height="6.8" fill="#fff" stroke="#1a1a1a" stroke-width="1"/><path d="M2.6 9.4 h4.6 M2.6 11.6 h4.6" stroke="#000" stroke-width="1.1"/><rect x="8.6" y="8" width="5.2" height="5.6" fill="#1414d8" stroke="#000040" stroke-width="0.6"/><path d="M1.5 15 h3 M9.5 15 h3" stroke="#909090" stroke-width="1"/></svg>
<span class="t" style="left:423.60px;top:234.35px;font-size:14px;line-height:14px;color:#000;font-weight:400;letter-spacing:0.406px;">Скрыть вкладку установки параметров</span>
<span class="t" style="left:760.90px;top:234.35px;font-size:14px;line-height:14px;color:#000;font-weight:400;letter-spacing:0.129px;">Не задана</span>
<svg style="left:407.5px;top:250.46000000000004px" width="15" height="16" viewBox="0 0 15 16"><path d="M2.2 6.2 A4 4 0 1 1 9.6 4.4" fill="none" stroke="#2a7a2a" stroke-width="2.4"/><path d="M2.2 6.2 A4 4 0 1 1 9.6 4.4" fill="none" stroke="#a8e8a0" stroke-width="1"/><path d="M7.5 4 L11.5 6.5 L11.5 2.5 Z" fill="#1a5a1a"/><path d="M10.8 0.3 L14.2 0.3 L12.5 3 Z" fill="#000"/><rect x="1" y="7.2" width="7.8" height="6.8" fill="#fff" stroke="#1a1a1a" stroke-width="1"/><path d="M2.6 9.4 h4.6 M2.6 11.6 h4.6" stroke="#000" stroke-width="1.1"/><rect x="8.6" y="8" width="5.2" height="5.6" fill="#1414d8" stroke="#000040" stroke-width="0.6"/><path d="M1.5 15 h3 M9.5 15 h3" stroke="#909090" stroke-width="1"/></svg>
<span class="t" style="left:423.60px;top:253.11px;font-size:14px;line-height:14px;color:#000;font-weight:400;letter-spacing:0.352px;">Скрыть вкладку выбора заставки</span>
<span class="t" style="left:760.90px;top:253.11px;font-size:14px;line-height:14px;color:#000;font-weight:400;letter-spacing:0.129px;">Не задана</span>
<svg style="left:407.5px;top:269.22px" width="15" height="16" viewBox="0 0 15 16"><path d="M2.2 6.2 A4 4 0 1 1 9.6 4.4" fill="none" stroke="#2a7a2a" stroke-width="2.4"/><path d="M2.2 6.2 A4 4 0 1 1 9.6 4.4" fill="none" stroke="#a8e8a0" stroke-width="1"/><path d="M7.5 4 L11.5 6.5 L11.5 2.5 Z" fill="#1a5a1a"/><path d="M10.8 0.3 L14.2 0.3 L12.5 3 Z" fill="#000"/><rect x="1" y="7.2" width="7.8" height="6.8" fill="#fff" stroke="#1a1a1a" stroke-width="1"/><path d="M2.6 9.4 h4.6 M2.6 11.6 h4.6" stroke="#000" stroke-width="1.1"/><rect x="8.6" y="8" width="5.2" height="5.6" fill="#1414d8" stroke="#000040" stroke-width="0.6"/><path d="M1.5 15 h3 M9.5 15 h3" stroke="#909090" stroke-width="1"/></svg>
<span class="t" style="left:423.60px;top:271.87px;font-size:14px;line-height:14px;color:#000;font-weight:400;letter-spacing:0.353px;">Использовать экранные заставки</span>
<span class="t" style="left:760.90px;top:271.87px;font-size:14px;line-height:14px;color:#000;font-weight:400;letter-spacing:0.201px;">Включена</span>
<svg style="left:407.5px;top:287.98px" width="15" height="16" viewBox="0 0 15 16"><path d="M2.2 6.2 A4 4 0 1 1 9.6 4.4" fill="none" stroke="#2a7a2a" stroke-width="2.4"/><path d="M2.2 6.2 A4 4 0 1 1 9.6 4.4" fill="none" stroke="#a8e8a0" stroke-width="1"/><path d="M7.5 4 L11.5 6.5 L11.5 2.5 Z" fill="#1a5a1a"/><path d="M10.8 0.3 L14.2 0.3 L12.5 3 Z" fill="#000"/><rect x="1" y="7.2" width="7.8" height="6.8" fill="#fff" stroke="#1a1a1a" stroke-width="1"/><path d="M2.6 9.4 h4.6 M2.6 11.6 h4.6" stroke="#000" stroke-width="1.1"/><rect x="8.6" y="8" width="5.2" height="5.6" fill="#1414d8" stroke="#000040" stroke-width="0.6"/><path d="M1.5 15 h3 M9.5 15 h3" stroke="#909090" stroke-width="1"/></svg>
<span class="t" style="left:423.60px;top:290.63px;font-size:14px;line-height:14px;color:#000;font-weight:400;letter-spacing:0.290px;">Имя исполняемого файла экранной заставки</span>
<span class="t" style="left:760.90px;top:290.63px;font-size:14px;line-height:14px;color:#000;font-weight:400;letter-spacing:0.201px;">Включена</span>
<svg style="left:407.5px;top:306.74px" width="15" height="16" viewBox="0 0 15 16"><path d="M2.2 6.2 A4 4 0 1 1 9.6 4.4" fill="none" stroke="#2a7a2a" stroke-width="2.4"/><path d="M2.2 6.2 A4 4 0 1 1 9.6 4.4" fill="none" stroke="#a8e8a0" stroke-width="1"/><path d="M7.5 4 L11.5 6.5 L11.5 2.5 Z" fill="#1a5a1a"/><path d="M10.8 0.3 L14.2 0.3 L12.5 3 Z" fill="#000"/><rect x="1" y="7.2" width="7.8" height="6.8" fill="#fff" stroke="#1a1a1a" stroke-width="1"/><path d="M2.6 9.4 h4.6 M2.6 11.6 h4.6" stroke="#000" stroke-width="1.1"/><rect x="8.6" y="8" width="5.2" height="5.6" fill="#1414d8" stroke="#000040" stroke-width="0.6"/><path d="M1.5 15 h3 M9.5 15 h3" stroke="#909090" stroke-width="1"/></svg>
<span class="t" style="left:423.60px;top:309.39px;font-size:14px;line-height:14px;color:#000;font-weight:400;letter-spacing:0.459px;">Использовать парольную защиту для экран...</span>
<span class="t" style="left:760.90px;top:309.39px;font-size:14px;line-height:14px;color:#000;font-weight:400;letter-spacing:0.201px;">Включена</span>
<svg style="left:407.5px;top:325.5px" width="15" height="16" viewBox="0 0 15 16"><path d="M2.2 6.2 A4 4 0 1 1 9.6 4.4" fill="none" stroke="#2a7a2a" stroke-width="2.4"/><path d="M2.2 6.2 A4 4 0 1 1 9.6 4.4" fill="none" stroke="#a8e8a0" stroke-width="1"/><path d="M7.5 4 L11.5 6.5 L11.5 2.5 Z" fill="#1a5a1a"/><path d="M10.8 0.3 L14.2 0.3 L12.5 3 Z" fill="#000"/><rect x="1" y="7.2" width="7.8" height="6.8" fill="#fff" stroke="#1a1a1a" stroke-width="1"/><path d="M2.6 9.4 h4.6 M2.6 11.6 h4.6" stroke="#000" stroke-width="1.1"/><rect x="8.6" y="8" width="5.2" height="5.6" fill="#1414d8" stroke="#000040" stroke-width="0.6"/><path d="M1.5 15 h3 M9.5 15 h3" stroke="#909090" stroke-width="1"/></svg>
<span class="t" style="left:423.60px;top:328.15px;font-size:14px;line-height:14px;color:#000;font-weight:400;letter-spacing:0.479px;">Таймаут экранной заставки</span>
<span class="t" style="left:760.90px;top:328.15px;font-size:14px;line-height:14px;color:#000;font-weight:400;letter-spacing:0.201px;">Включена</span>
<div style="left:194px;top:950px;width:1456px;height:26px;background:#d5d2cc;"></div>
<div style="left:194px;top:952px;width:1456px;height:1.3px;background:#404040;"></div>
<svg style="left:190px;top:950px" width="260" height="26" viewBox="0 0 260 26"><path d="M128 3 L121.5 22.3 L236.1 22.3 L242.4 3" fill="#d5d2cc" stroke="#000" stroke-width="1.1"/><path d="M129.5 4 Q125 13 127 22" fill="none" stroke="#fff" stroke-width="1"/><path d="M2.5 1.5 L3.7 2.6 L12.3 22.3 L121 22.3 L127.4 2.6 L128.5 1.5 Z" fill="#fff"/><path d="M3.7 2.6 L12.3 22.3 L121 22.3 L127.4 2.6" fill="none" stroke="#000" stroke-width="1.1"/></svg>
<span class="t" style="left:208.80px;top:956.45px;font-size:14px;line-height:14px;color:#000;font-weight:400;letter-spacing:-0.024px;">Расширенный</span>
<span class="t" style="left:325.40px;top:956.45px;font-size:14px;line-height:14px;color:#000;font-weight:400;letter-spacing:0.256px;">Стандартный</span>
<div style="left:2px;top:954px;width:187px;height:18px;background:repeating-conic-gradient(#ffffff 0 25%, #d5d2cc 0 50%) 0 0/2px 2px;"></div>
<div style="left:2px;top:954px;width:17.5px;height:18px;box-shadow: inset -1px -1px #404040, inset 1px 1px #ffffff, inset -2px -2px #808080, inset 2px 2px #e6e3de;background:#d5d2cc;"></div>
<div style="left:19.5px;top:954px;width:86px;height:18px;box-shadow: inset -1px -1px #404040, inset 1px 1px #ffffff, inset -2px -2px #808080, inset 2px 2px #e6e3de;background:#d5d2cc;"></div>
<div style="left:171.5px;top:954px;width:17.5px;height:18px;box-shadow: inset -1px -1px #404040, inset 1px 1px #ffffff, inset -2px -2px #808080, inset 2px 2px #e6e3de;background:#d5d2cc;"></div>
<svg style="left:2px;top:954px" width="18" height="18" viewBox="0 0 18 18" shape-rendering="crispEdges"><path d="M7 9 L11 5 L11 13 Z" fill="#000"/></svg>
<svg style="left:171.5px;top:954px" width="18" height="18" viewBox="0 0 18 18" shape-rendering="crispEdges"><path d="M11 9 L7 5 L7 13 Z" fill="#000"/></svg>
<div style="left:0px;top:976px;width:1650px;height:24px;background:#d5d2cc;"></div>
<div style="left:0px;top:975.5px;width:1650px;height:1.2px;background:#6a6864;"></div>
<div style="left:2px;top:977px;width:1431px;height:22.5px;box-shadow: inset 1px 1px #808080, inset -1px -1px #ffffff;"></div>
<div style="left:1435.3px;top:977px;width:129px;height:22.5px;box-shadow: inset 1px 1px #808080, inset -1px -1px #ffffff;"></div>
<div style="left:1566.4px;top:977px;width:81px;height:22.5px;box-shadow: inset 1px 1px #808080, inset -1px -1px #ffffff;"></div>
<div style="left:0px;top:999.5px;width:1650px;height:31.5px;background:#d5d2cc;"></div>
<div style="left:0px;top:999.5px;width:1650px;height:1.3px;background:#ffffff;"></div>
<div style="left:2px;top:1003.3px;width:60.7px;height:23.7px;box-shadow: inset -1px -1px #404040, inset 1px 1px #ffffff, inset -2px -2px #808080, inset 2px 2px #e6e3de;background:#d5d2cc;"></div>
<span class="t" style="left:20.90px;top:1007.60px;font-size:15px;line-height:15px;color:#000;font-weight:700;letter-spacing:0.964px;">Пуск</span>
<div style="left:69.5px;top:1004px;width:2px;height:23px;box-shadow: inset 1px 0 #808080, inset -1px 0 #fff;"></div>
<div style="left:173.5px;top:1004px;width:2px;height:23px;box-shadow: inset 1px 0 #808080, inset -1px 0 #fff;"></div>
<div style="left:180.6px;top:1003.3px;width:156.8px;height:24.3px;box-shadow: inset -1px -1px #404040, inset 1px 1px #ffffff, inset -2px -2px #808080, inset 2px 2px #e6e3de;background:#d5d2cc;"></div>
<div style="left:340.5px;top:1003.3px;width:156.8px;height:24.3px;box-shadow: inset -1px -1px #404040, inset 1px 1px #ffffff, inset -2px -2px #808080, inset 2px 2px #e6e3de;background:#d5d2cc;"></div>
<div style="left:501px;top:1003.8px;width:156.1px;height:23.8px;background:repeating-conic-gradient(#ffffff 0 25%, #d5d2cc 0 50%) 0 0/2px 2px;box-shadow: inset 1px 1px #404040, inset -1px -1px #ffffff, inset 2px 2px #808080;"></div>
<div style="left:503px;top:1006px;width:152px;height:20px;background:#e8e6e2;"></div>
<span class="t" style="left:205.00px;top:1008.80px;font-size:15px;line-height:15px;color:#000;font-weight:400;letter-spacing:0.230px;">Group Policy Ma...</span>
<span class="t" style="left:365.60px;top:1008.80px;font-size:15px;line-height:15px;color:#000;font-weight:400;letter-spacing:0.393px;">Active Directory...</span>
<span class="t" style="left:526.20px;top:1008.76px;font-size:16px;line-height:16px;color:#000;font-weight:700;letter-spacing:0.504px;">Редактор об...</span>
<div style="left:1506.5px;top:1004px;width:2px;height:23px;box-shadow: inset 1px 0 #808080, inset -1px 0 #fff;"></div>
<div style="left:1539px;top:1004px;width:2px;height:23px;box-shadow: inset 1px 0 #808080, inset -1px 0 #fff;"></div>
<div style="left:1517px;top:1006.8px;width:18px;height:18.2px;background:#0a246a;"></div>
<span class="t" style="left:1517.20px;top:1010.92px;font-size:12.5px;line-height:12.5px;color:#fff;font-weight:400;letter-spacing:-0.875px;">EN</span>
<div style="left:1546.2px;top:1004px;width:101px;height:23.8px;box-shadow: inset 1px 1px #808080, inset -1px -1px #ffffff;"></div>
<span class="t" style="left:1596.40px;top:1008.80px;font-size:15px;line-height:15px;color:#000;font-weight:400;letter-spacing:0.413px;">16:29</span>
<div style="left:915px;top:144.4px;width:397px;height:459.8px;background:#d5d2cc;box-shadow: inset 1px 1px #e8e6e2, inset -1px -1px #404040, inset 2px 2px #ffffff, inset -2px -2px #808080;"></div>
<div style="left:918px;top:147.3px;width:391px;height:20.8px;background:#0a246a;"></div>
<span class="t" style="left:919.90px;top:150.59px;font-size:15.6px;line-height:15.6px;color:#fff;font-weight:700;letter-spacing:0.408px;">Свойства: Имя исполняемого файла экр...</span>
<div style="left:1268.1px;top:149.2px;width:17.5px;height:15.5px;box-shadow: inset -1px -1px #404040, inset 1px 1px #ffffff, inset -2px -2px #808080, inset 2px 2px #e6e3de;background:#d5d2cc;"></div>
<div style="left:1288.5px;top:149.2px;width:18px;height:15.5px;box-shadow: inset -1px -1px #404040, inset 1px 1px #ffffff, inset -2px -2px #808080, inset 2px 2px #e6e3de;background:#d5d2cc;"></div>
<span class="t" style="left:1272.60px;top:151.50px;font-size:13px;line-height:13px;color:#000;font-weight:700;">?</span>
<svg style="left:1288.5px;top:149.2px" width="18" height="16" viewBox="0 0 18 16" shape-rendering="crispEdges"><path d="M5 3.5 L13 11.5 M13 3.5 L5 11.5" stroke="#000" stroke-width="2"/></svg>
<div style="left:924.5px;top:195.5px;width:378.5px;height:370px;box-shadow: inset 1px 1px #ffffff, inset -1px -1px #404040, inset -2px -2px #808080;"></div>
<div style="left:990px;top:178.8px;width:71.6px;height:17px;background:#d5d2cc;box-shadow: inset 1px 1px #ffffff, inset -1px 0 #404040, inset -2px 0 #808080;"></div>
<div style="left:925.4px;top:176.4px;width:64.5px;height:21px;background:#d5d2cc;box-shadow: inset 1px 1px #ffffff, inset -1px 0 #404040, inset -2px 0 #808080;"></div>
<span class="t" style="left:932.00px;top:180.52px;font-size:11.2px;line-height:11.2px;color:#000;font-weight:400;letter-spacing:-0.301px;">Параметр</span>
<span class="t" style="left:994.10px;top:181.92px;font-size:11.2px;line-height:11.2px;color:#000;font-weight:400;letter-spacing:-0.371px;">Объяснение</span>
<svg style="left:938.5px;top:209.8px" width="15" height="16" viewBox="0 0 15 16"><path d="M2.2 6.2 A4 4 0 1 1 9.6 4.4" fill="none" stroke="#2a7a2a" stroke-width="2.4"/><path d="M2.2 6.2 A4 4 0 1 1 9.6 4.4" fill="none" stroke="#a8e8a0" stroke-width="1"/><path d="M7.5 4 L11.5 6.5 L11.5 2.5 Z" fill="#1a5a1a"/><path d="M10.8 0.3 L14.2 0.3 L12.5 3 Z" fill="#000"/><rect x="1" y="7.2" width="7.8" height="6.8" fill="#fff" stroke="#1a1a1a" stroke-width="1"/><path d="M2.6 9.4 h4.6 M2.6 11.6 h4.6" stroke="#000" stroke-width="1.1"/><rect x="8.6" y="8" width="5.2" height="5.6" fill="#1414d8" stroke="#000040" stroke-width="0.6"/><path d="M1.5 15 h3 M9.5 15 h3" stroke="#909090" stroke-width="1"/></svg>
<span class="t" style="left:957.30px;top:208.52px;font-size:11.2px;line-height:11.2px;color:#000;font-weight:400;letter-spacing:-0.113px;">Имя исполняемого файла экранной заставки</span>
<div style="left:938.3px;top:242.3px;width:351px;height:1.3px;background:#7a7874;"></div>
<div style="left:938.3px;top:243.5px;width:351px;height:1px;background:#ffffff;"></div>
<svg style="left:939.8px;top:257.3px" width="12" height="12" viewBox="0 0 12 12"><circle cx="6" cy="6" r="5.5" fill="#fff"/><path d="M2.32 9.68 A5.2 5.2 0 0 1 9.68 2.32" fill="none" stroke="#808080" stroke-width="1.2"/><path d="M3.03 8.97 A4.2 4.2 0 0 1 8.97 3.03" fill="none" stroke="#303030" stroke-width="1.1"/><path d="M9.68 2.32 A5.2 5.2 0 0 1 2.32 9.68" fill="none" stroke="#ffffff" stroke-width="1.2"/></svg>
<svg style="left:939.8px;top:277.1px" width="12" height="12" viewBox="0 0 12 12"><circle cx="6" cy="6" r="5.5" fill="#fff"/><path d="M2.32 9.68 A5.2 5.2 0 0 1 9.68 2.32" fill="none" stroke="#808080" stroke-width="1.2"/><path d="M3.03 8.97 A4.2 4.2 0 0 1 8.97 3.03" fill="none" stroke="#303030" stroke-width="1.1"/><path d="M9.68 2.32 A5.2 5.2 0 0 1 2.32 9.68" fill="none" stroke="#ffffff" stroke-width="1.2"/><circle cx="6" cy="6" r="2.2" fill="#000"/></svg>
<svg style="left:939.8px;top:295.9px" width="12" height="12" viewBox="0 0 12 12"><circle cx="6" cy="6" r="5.5" fill="#fff"/><path d="M2.32 9.68 A5.2 5.2 0 0 1 9.68 2.32" fill="none" stroke="#808080" stroke-width="1.2"/><path d="M3.03 8.97 A4.2 4.2 0 0 1 8.97 3.03" fill="none" stroke="#303030" stroke-width="1.1"/><path d="M9.68 2.32 A5.2 5.2 0 0 1 2.32 9.68" fill="none" stroke="#ffffff" stroke-width="1.2"/></svg>
<span class="t" style="left:956.10px;top:257.92px;font-size:11.2px;line-height:11.2px;color:#000;font-weight:400;letter-spacing:-0.172px;">Не задан</span>
<span class="t" style="left:956.10px;top:277.52px;font-size:11.2px;line-height:11.2px;color:#000;font-weight:400;letter-spacing:-0.148px;">Включен</span>
<span class="t" style="left:956.10px;top:296.52px;font-size:11.2px;line-height:11.2px;color:#000;font-weight:400;letter-spacing:-0.364px;">Отключен</span>
<div style="left:956.7px;top:269.2px;width:8.5px;height:1px;background:#000;"></div>
<div style="left:956.7px;top:288.8px;width:7.5px;height:1px;background:#000;"></div>
<div style="left:956.7px;top:307.8px;width:8px;height:1px;background:#000;"></div>
<div style="left:955.5px;top:276px;width:46px;height:16.5px;border:1px dotted #303030;"></div>
<div style="left:940.2px;top:315.2px;width:350.1px;height:188.1px;box-shadow: inset 1px 1px #505050, inset 1.6px 1.6px #9a9894, inset -1px -1px #ffffff;"></div>
<span class="t" style="left:945.90px;top:321.72px;font-size:11.2px;line-height:11.2px;color:#000;font-weight:400;letter-spacing:-0.121px;">Имя исполняемого файла экранной заставки</span>
<div style="left:947.2px;top:344.8px;width:212.6px;height:15.8px;background:#fff;box-shadow: inset 1px 1px #808080, inset -1px -1px #ffffff, inset 2px 2px #404040, inset -2px -2px #d5d2cc;"></div>
<span class="t" style="left:950.00px;top:347.52px;font-size:11.2px;line-height:11.2px;color:#000;font-weight:400;letter-spacing:-0.501px;">logon.scr</span>
<span class="t" style="left:939.00px;top:512.72px;font-size:11.2px;line-height:11.2px;color:#000;font-weight:400;letter-spacing:-0.279px;">Поддерживается:</span>
<span class="t" style="left:1034.20px;top:512.72px;font-size:11.2px;line-height:11.2px;color:#000;font-weight:400;letter-spacing:-0.372px;">не ниже Microsoft Windows 2000 SP1</span>
<div style="left:939.2px;top:531.4px;width:132.2px;height:22.4px;box-shadow: inset -1px -1px #404040, inset 1px 1px #ffffff, inset -2px -2px #808080, inset 2px 2px #e6e3de;background:#d5d2cc;"></div>
<div style="left:1077px;top:531.4px;width:125.6px;height:22.4px;box-shadow: inset -1px -1px #404040, inset 1px 1px #ffffff, inset -2px -2px #808080, inset 2px 2px #e6e3de;background:#d5d2cc;"></div>
<span class="t" style="left:946.90px;top:536.72px;font-size:11.2px;line-height:11.2px;color:#000;font-weight:400;letter-spacing:-0.326px;">Предыдущий параметр</span>
<span class="t" style="left:1084.60px;top:536.72px;font-size:11.2px;line-height:11.2px;color:#000;font-weight:400;letter-spacing:-0.372px;">Следующий параметр</span>
<div style="left:947.5px;top:548px;width:8px;height:1px;background:#000;"></div>
<div style="left:1085.2px;top:548px;width:7px;height:1px;background:#000;"></div>
<div style="left:1070.7px;top:571.4px;width:73.1px;height:22.5px;background:#d5d2cc;box-shadow: inset 1px 1px #000, inset -1px -1px #000, inset 2px 2px #ffffff, inset -2px -2px #404040, inset -3px -3px #808080;"></div>
<div style="left:1150px;top:571.4px;width:73.4px;height:22.5px;box-shadow: inset -1px -1px #404040, inset 1px 1px #ffffff, inset -2px -2px #808080, inset 2px 2px #e6e3de;background:#d5d2cc;"></div>
<div style="left:1229.1px;top:571.4px;width:73.8px;height:22.5px;box-shadow: inset -1px -1px #404040, inset 1px 1px #ffffff, inset -2px -2px #808080, inset 2px 2px #e6e3de;background:#d5d2cc;"></div>
<span class="t" style="left:1099.80px;top:575.82px;font-size:11.2px;line-height:11.2px;color:#000;font-weight:400;letter-spacing:-1.172px;">OK</span>
<span class="t" style="left:1168.00px;top:575.82px;font-size:11.2px;line-height:11.2px;color:#000;font-weight:400;letter-spacing:-0.548px;">Отмена</span>
<span class="t" style="left:1239.40px;top:576.82px;font-size:11.2px;line-height:11.2px;color:#ffffff;font-weight:400;letter-spacing:-0.289px;">Применить</span>
<span class="t" style="left:1238.40px;top:575.82px;font-size:11.2px;line-height:11.2px;color:#8a8884;font-weight:400;letter-spacing:-0.289px;">Применить</span>
<div style="left:1260px;top:587.5px;width:8px;height:1px;background:#8a8884;"></div>
<svg style="left:2px;top:1px" width="19.0" height="19.0" viewBox="0 0 19 19"><path d="M2 4 Q6 0 11 2 L12 4 L8 4 Z" fill="#e0e0e0" stroke="#000" stroke-width="1"/><path d="M10 2 L14 1 L13 5" fill="none" stroke="#000" stroke-width="1"/><rect x="4" y="7" width="4" height="11" fill="#f0f040" stroke="#000" stroke-width="1"/><rect x="9" y="8" width="9" height="9" fill="#f4f0f8" stroke="#000" stroke-width="1.2"/><path d="M11 10 v5 M13 10 v5 M15 10 v5" stroke="#a02060" stroke-width="1.2"/></svg>
<div style="left:1594.5px;top:13px;width:7px;height:2px;background:#000;"></div>
<svg style="left:1609px;top:2px" width="18" height="17" viewBox="0 0 18 17" shape-rendering="crispEdges"><rect x="6.5" y="3.5" width="7" height="5" fill="none" stroke="#000" stroke-width="1"/><rect x="6" y="3" width="8" height="2" fill="#000"/><rect x="4.5" y="7.5" width="7" height="5.5" fill="#d5d2cc" stroke="#000" stroke-width="1"/><rect x="4" y="7" width="8" height="2" fill="#000"/></svg>
<svg style="left:1629px;top:2.5px" width="18" height="16" viewBox="0 0 18 17" shape-rendering="crispEdges"><path d="M4.5 3.5 L12.5 11.5 M12.5 3.5 L4.5 11.5" stroke="#000" stroke-width="1.8"/></svg>
<div style="left:1648px;top:24px;width:2px;height:48px;background:#5a5856;"></div>
<div style="left:0px;top:24px;width:1.3px;height:50px;background:#6a6866;"></div>
<div style="left:1648px;top:75px;width:1px;height:876px;background:#b8b8b8;"></div>
<div style="left:1649px;top:75px;width:1px;height:876px;background:#ffffff;"></div>
<div style="left:49.8px;top:52px;width:2px;height:18px;box-shadow: inset 1px 0 #808080, inset -1px 0 #ffffff;"></div>
<div style="left:102.8px;top:52px;width:2px;height:18px;box-shadow: inset 1px 0 #808080, inset -1px 0 #ffffff;"></div>
<div style="left:155.8px;top:52px;width:2px;height:18px;box-shadow: inset 1px 0 #808080, inset -1px 0 #ffffff;"></div>
<svg style="left:7px;top:54px" width="13" height="12" viewBox="0 0 13 12"><path d="M0.8 6 L6 1 L6 4 L12 4 L12 8 L6 8 L6 11 Z" fill="#40d8e0" stroke="#004060" stroke-width="1"/></svg>
<svg style="left:29px;top:54px" width="13" height="12" viewBox="0 0 13 12"><path d="M12.2 6 L7 1 L7 4 L1 4 L1 8 L7 8 L7 11 Z" fill="#8c8c8c"/></svg>
<svg style="left:59px;top:53px" width="16" height="14" viewBox="0 0 16 14"><path d="M1 2 L6 2 L7 3.5 L15 3.5 L15 13 L1 13 Z" fill="#f0f090" stroke="#000" stroke-width="1.2"/><path d="M5 7 L7 5 L9 7 M7 5.5 L7 10 L12 10" fill="none" stroke="#000" stroke-width="1.3"/></svg>
<div style="left:78.5px;top:49.5px;width:21px;height:21px;background:repeating-conic-gradient(#ffffff 0 25%, #d5d2cc 0 50%) 0 0/2px 2px;box-shadow: inset 1px 1px #808080, inset -1px -1px #ffffff;"></div>
<svg style="left:82px;top:54px" width="15" height="13" viewBox="0 0 15 13"><rect x="0.7" y="0.7" width="13.6" height="11.6" fill="#c0c0d8" stroke="#101060" stroke-width="1.3"/><path d="M4.5 1 v11 M10.5 1 v11" stroke="#101060" stroke-width="1"/><path d="M9.5 3.5 L6.5 6.5 L9.5 9.5 Z" fill="#000"/><path d="M1.8 4 h2 M1.8 6.5 h2 M1.8 9 h2" stroke="#fff" stroke-width="1"/></svg>
<svg style="left:111px;top:52px" width="17" height="15" viewBox="0 0 17 15"><rect x="1" y="5" width="11" height="9.5" fill="#fff" stroke="#000" stroke-width="1.2"/><path d="M3 8 h7 M3 10.5 h7 M3 12.5 h7" stroke="#000" stroke-width="1"/><path d="M5 5 L9 1.5 L15 1.5 L15 6 L11 8" fill="#c8c8e0" stroke="#000" stroke-width="1"/><path d="M13 1 L16 3" stroke="#000" stroke-width="1.5"/></svg>
<svg style="left:135px;top:52px" width="15" height="15" viewBox="0 0 15 15"><rect x="1" y="1" width="9" height="13" fill="#fff" stroke="#000" stroke-width="1.2"/><path d="M3 4 h5 M3 7 h3 M3 10 h3" stroke="#000" stroke-width="1"/><path d="M6 8 L11 8 L11 6 L14.5 9.5 L11 13 L11 11 L6 11 Z" fill="#fff" stroke="#000" stroke-width="1"/></svg>
<svg style="left:165px;top:52px" width="15" height="15" viewBox="0 0 15 15"><rect x="1" y="5" width="9" height="9.5" fill="#fff" stroke="#000" stroke-width="1.2"/><path d="M3 8 h5 M3 10.5 h5 M3 12.5 h5" stroke="#000" stroke-width="1"/><path d="M7 4 Q7 1 10.5 1 Q14 1 14 4 Q14 6 11 7 L11 9" fill="none" stroke="#000" stroke-width="2.2"/><path d="M7 4 Q7 1 10.5 1 Q14 1 14 4 Q14 6 11 7 L11 9" fill="none" stroke="#f0f020" stroke-width="1"/><circle cx="11" cy="12" r="1.2" fill="#000"/></svg>
<svg style="left:187px;top:53px" width="15" height="14" viewBox="0 0 15 14"><rect x="0.7" y="0.7" width="13.6" height="12" fill="#c0c0d8" stroke="#101060" stroke-width="1.3"/><path d="M4.5 1 v11 M10.5 1 v11" stroke="#101060" stroke-width="1"/><path d="M5.5 3.5 L8.5 6.5 L5.5 9.5 Z" fill="#000"/><path d="M11.5 4 h2 M11.5 6.5 h2 M11.5 9 h2" stroke="#fff" stroke-width="1"/></svg>
<svg style="left:4px;top:1007px" width="17" height="17" viewBox="0 0 17 17"><path d="M2 3 Q5 1 8 3 L7 8 Q4 6 1 8 Z" fill="#f05020"/><path d="M9 3 Q12 5 15 3 L14 8 Q11 10 8 8 Z" fill="#40b030"/><path d="M1 9 Q4 7 7 9 L6 14 Q3 12 0 14 Z" fill="#2060e0"/><path d="M8 9 Q11 11 14 9 L13 14 Q10 16 7 14 Z" fill="#f0c020"/></svg>
<svg style="left:80px;top:1008px" width="17" height="17" viewBox="0 0 17 17"><path d="M3 2 L12 2 L15 4 L15 15 L6 15 L3 13 Z" fill="#c8cce8" stroke="#8088b0" stroke-width="0.8"/><path d="M6 4 L6 15" stroke="#f0f0ff" stroke-width="1.5"/></svg>
<svg style="left:104px;top:1008px" width="18" height="16" viewBox="0 0 18 16"><rect x="0.5" y="0.5" width="17" height="15" fill="#10183a" stroke="#2040a0" stroke-width="1"/><text x="2" y="12" font-size="8" font-weight="bold" fill="#fff" font-family="Liberation Sans">C:\</text></svg>
<svg style="left:130px;top:1008px" width="16" height="16" viewBox="0 0 16 16"><circle cx="8" cy="8" r="7.5" fill="#e0382c"/><path d="M8 8 L1.5 11.8 A7.5 7.5 0 0 1 1.6 4 Z" fill="#30a040"/><path d="M8 8 L14.5 4.2 A7.5 7.5 0 0 1 8 15.5 Z" fill="#f2c020"/><path d="M8 8 L8 15.5 A7.5 7.5 0 0 1 1.5 11.8 Z" fill="#30a040"/><circle cx="8" cy="8" r="3.6" fill="#fff"/><circle cx="8" cy="8" r="2.7" fill="#3a7ce0"/></svg>
<svg style="left:157px;top:1006px" width="11" height="9" viewBox="0 0 11 9"><path d="M1 1 L4 4 L1 7 M5 1 L8 4 L5 7" fill="none" stroke="#000" stroke-width="1.6"/></svg>
<svg style="left:184px;top:1006px" width="17" height="18" viewBox="0 0 17 18"><rect x="1" y="1" width="7" height="6" fill="#b0c8f0" stroke="#303060" stroke-width="1"/><path d="M1 9 h7" stroke="#000" stroke-width="1.2"/><path d="M10 3 h5 M10 7 h5 M10 11 h5 M10 15 h5" stroke="#404040" stroke-width="1.4"/><path d="M12 3 v12" stroke="#c0c040" stroke-width="1"/></svg>
<svg style="left:344px;top:1006px" width="18" height="17" viewBox="0 0 18 17"><path d="M2 9 L11 2 L16 5 L7 13 Z" fill="#f0f0f0" stroke="#000" stroke-width="1"/><path d="M1 11 L8 15 L17 8 L16 6 L7 13 Z" fill="#d0d040" stroke="#000" stroke-width="1"/></svg>
<svg style="left:506px;top:1006px" width="18.05" height="18.05" viewBox="0 0 19 19"><path d="M2 4 Q6 0 11 2 L12 4 L8 4 Z" fill="#e0e0e0" stroke="#000" stroke-width="1"/><path d="M10 2 L14 1 L13 5" fill="none" stroke="#000" stroke-width="1"/><rect x="4" y="7" width="4" height="11" fill="#f0f040" stroke="#000" stroke-width="1"/><rect x="9" y="8" width="9" height="9" fill="#f4f0f8" stroke="#000" stroke-width="1.2"/><path d="M11 10 v5 M13 10 v5 M15 10 v5" stroke="#a02060" stroke-width="1.2"/></svg>
<svg style="left:1550px;top:1006px" width="17" height="18" viewBox="0 0 17 18"><rect x="5" y="1" width="10" height="9" fill="#60b8f0" stroke="#3070c0" stroke-width="1"/><rect x="1" y="5" width="10" height="9" fill="#80d0ff" stroke="#3070c0" stroke-width="1"/><path d="M2 15 h8 M9 11 h7" stroke="#8080c0" stroke-width="2"/></svg>
<svg style="left:1569px;top:1006px" width="17" height="18" viewBox="0 0 17 18"><rect x="5" y="1" width="10" height="9" fill="#60b8f0" stroke="#3070c0" stroke-width="1"/><rect x="1" y="5" width="10" height="9" fill="#80d0ff" stroke="#3070c0" stroke-width="1"/><path d="M2 15 h8 M9 11 h7" stroke="#8080c0" stroke-width="2"/></svg>
</body></html>
